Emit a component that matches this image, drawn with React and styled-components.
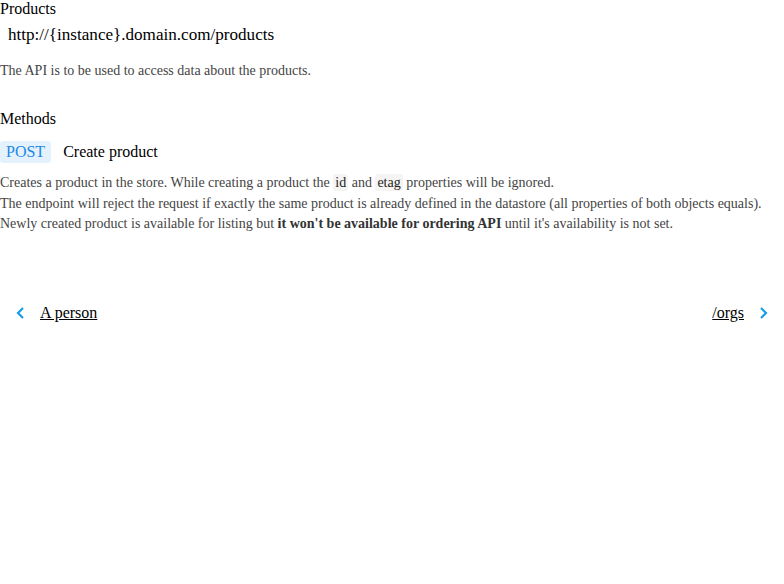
import React from 'react';
import styled, { createGlobalStyle } from 'styled-components';

const GlobalStyle = createGlobalStyle`
  body {
    margin: 0;
    background: #fff;
    font-family: "Liberation Serif", "Times New Roman", serif;
    color: #000;
  }
`;

const Page = styled.div`
  display: flex;
  flex-direction: column;
`;

const Heading = styled.h2`
  margin: 0;
  font-size: 16px;
  font-weight: normal;
  line-height: 18px;
`;

const Url = styled.div`
  margin: 6px 0 0 8px;
  font-size: 17.1px;
  line-height: 22px;
`;

const Description = styled.p`
  margin: 15px 0 0;
  font-size: 14px;
  line-height: 20px;
  color: #444;
`;

const SectionTitle = styled(Heading)`
  margin-top: 29px;
`;

const MethodRow = styled.div`
  display: flex;
  align-items: center;
  gap: 12px;
  margin-top: 13px;
`;

const Badge = styled.span`
  padding: 1px 6px;
  border-radius: 3px;
  background: #e3f2fd;
  color: #1e88e5;
  font-size: 16px;
  line-height: 20px;
`;

const MethodName = styled.span`
  font-size: 16px;
`;

const MethodText = styled.div`
  margin-top: 10px;
  font-size: 14px;
  line-height: 20.5px;
  color: #444;

  b {
    color: #333;
  }
`;

const Code = styled.code`
  font-family: inherit;
  background: #f6f4f2;
  color: #222;
  padding: 1px 2px;
  border-radius: 3px;
`;

const Nav = styled.nav`
  display: flex;
  justify-content: space-between;
  align-items: center;
  margin-top: 69px;
  padding: 0 16px;
`;

const NavLink = styled.a`
  display: flex;
  align-items: center;
  gap: 14px;
  color: #000;
  font-size: 16px;
  text-decoration: underline;
  cursor: pointer;
`;

const Chevron = ({ dir }) => (
  <svg width="10" height="14" viewBox="0 0 10 14">
    <path
      d={dir === 'left' ? 'M7 2 L2 7 L7 12' : 'M3 2 L8 7 L3 12'}
      fill="none"
      stroke="#1a9be6"
      strokeWidth="2.2"
    />
  </svg>
);

const App = () => (
  <>
    <GlobalStyle />
    <Page>
      <Heading>Products</Heading>
      <Url>http://&#123;instance&#125;.domain.com/products</Url>
      <Description>The API is to be used to access data about the products.</Description>
      <SectionTitle>Methods</SectionTitle>
      <MethodRow>
        <Badge>POST</Badge>
        <MethodName>Create product</MethodName>
      </MethodRow>
      <MethodText>
        Creates a product in the store. While creating a product the <Code>id</Code> and{' '}
        <Code>etag</Code> properties will be ignored.
        <br />
        The endpoint will reject the request if exactly the same product is already defined in the
        datastore (all properties of both objects equals).
        <br />
        Newly created product is available for listing but <b>it won't be available for ordering API</b>{' '}
        until it's availability is not set.
      </MethodText>
      <Nav>
        <NavLink>
          <Chevron dir="left" />
          A person
        </NavLink>
        <NavLink>
          /orgs
          <Chevron dir="right" />
        </NavLink>
      </Nav>
    </Page>
  </>
);

export default App;
